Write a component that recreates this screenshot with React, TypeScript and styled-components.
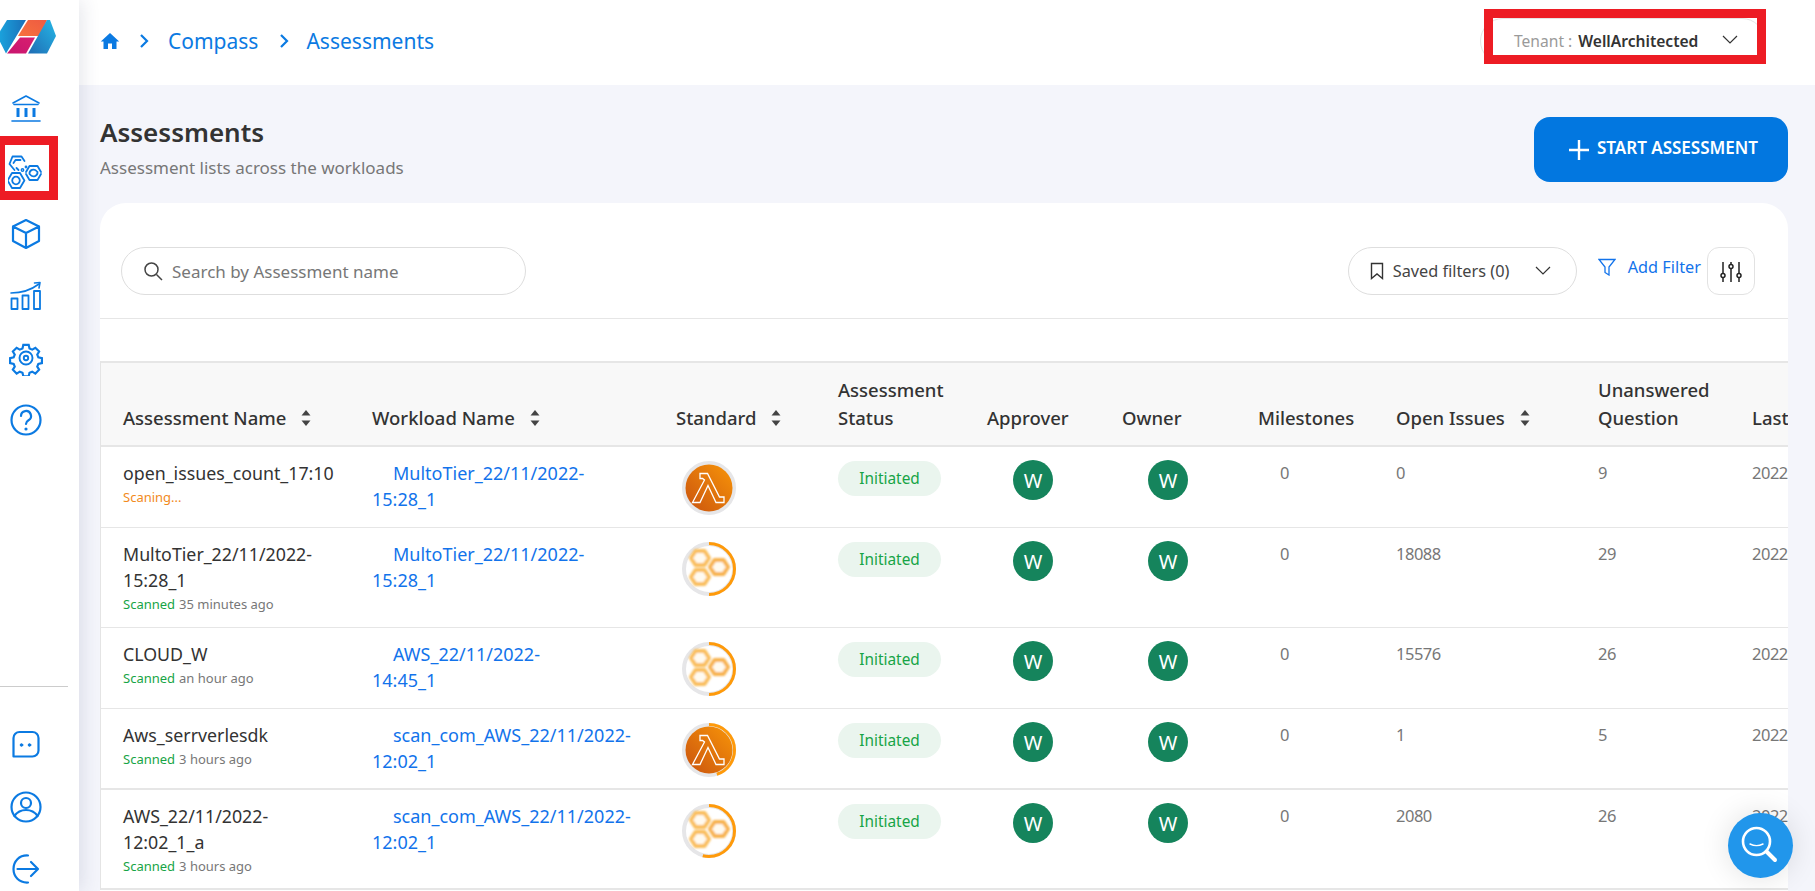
import React from "react";
import styled, { createGlobalStyle } from "styled-components";

const FONT = `"Noto Sans", "Open Sans", Arial, sans-serif`;
const BLUE = "#0b7ae2";
const LINK = "#1273eb";

const Global = createGlobalStyle`
  html, body { margin: 0; padding: 0; height: 891px; overflow: hidden; background: #f4f5fb; }
  body { font-family: ${FONT}; color: #333; }
  * { box-sizing: border-box; }
  #root { height: 891px; }
`;

const Shell = styled.div`
  display: flex;
  width: 1815px;
  height: 891px;
  overflow: hidden;
`;
const Sidebar = styled.aside`
  position: relative;
  z-index: 3;
  flex: 0 0 79px;
  display: flex;
  flex-direction: column;
  background: #fff;
  box-shadow: 3px 0 18px rgba(40, 50, 90, 0.12);
  overflow: hidden;
`;
const LogoWrap = styled.div`
  height: 79px;
  padding-top: 20px;
  svg { display: block; }
`;
const NavItem = styled.div`
  height: 62px;
  display: flex;
  align-items: center;
  padding-left: 8px;
  svg { display: block; }
`;
const NavBottom = styled.div`
  margin-top: auto;
  margin-bottom: -9px;
`;
const Rule = styled.div`
  width: 68px;
  height: 1px;
  background: #ccc;
  margin-bottom: 27px;
`;
const Mark = styled.div`
  position: absolute;
  left: -4px;
  top: 136px;
  width: 62px;
  height: 64px;
  border: 9px solid #ed1c24;
`;
const Main = styled.main`
  flex: 1;
  display: flex;
  flex-direction: column;
  min-width: 0;
`;
const Header = styled.header`
  position: relative;
  flex: 0 0 85px;
  background: #fff;
  display: flex;
  align-items: center;
  padding: 0 21px 4px;
`;
const Crumbs = styled.nav`
  display: flex;
  align-items: center;
  color: ${BLUE};
  font-size: 21px;
  svg { display: block; }
`;
const CrumbArrow = styled.svg<{ $left: number; $right: number }>`
  margin: 0 ${(p) => p.$right}px 0 ${(p) => p.$left}px;
`;
const Tenant = styled.div`
  position: absolute;
  left: 1401px;
  top: 18px;
  width: 285px;
  height: 46px;
  border: 1px solid #e4e4e4;
  border-radius: 23px;
  display: flex;
  align-items: center;
  padding-left: 33px;
  font-size: 15.6px;
  svg { margin-left: 24px; display: block; margin-top: -2px; }
`;
const TenantLabel = styled.span`
  color: #9a9a9a;
  margin-right: 6px;
`;
const TenantValue = styled.span`
  color: #333;
  font-weight: 600;
`;
const TenantMark = styled.div`
  position: absolute;
  left: 1405px;
  top: 9px;
  width: 282px;
  height: 55px;
  border: 9px solid #ed1c24;
`;
const Content = styled.div`
  flex: 1;
  padding: 32px 27px 0 21px;
  min-height: 0;
  display: flex;
  flex-direction: column;
`;
const TitleRow = styled.div`
  display: flex;
  justify-content: space-between;
  align-items: flex-start;
  height: 86px;
`;
const Title = styled.h1`
  margin: 0;
  font-size: 26px;
  line-height: 30px;
  font-weight: 600;
  color: #333;
`;
const Sub = styled.p`
  margin: 10px 0 0;
  font-size: 17px;
  line-height: 22px;
  color: #777;
`;
const StartButton = styled.button`
  width: 254px;
  height: 65px;
  border: 0;
  border-radius: 16px;
  background: #0277e0;
  color: #fff;
  font-family: ${FONT};
  font-size: 17px;
  font-weight: 600;
  display: flex;
  align-items: center;
  justify-content: flex-end;
  padding: 0 30px 4px 0;
  svg { margin-right: 8px; display: block; margin-top: 5px; }
`;
const Card = styled.section`
  flex: 1;
  background: #fff;
  border-radius: 26px 26px 0 0;
  overflow: hidden;
  display: flex;
  flex-direction: column;
`;
const Toolbar = styled.div`
  display: flex;
  align-items: flex-start;
  height: 116px;
  padding: 44px 33px 0 21px;
  border-bottom: 1px solid #e6e6e6;
  flex: none;
`;
const Search = styled.div`
  width: 405px;
  height: 48px;
  border: 1px solid #dedede;
  border-radius: 24px;
  display: flex;
  align-items: center;
  padding-left: 21px;
  font-size: 17px;
  color: #777;
  svg { margin-right: 9px; display: block; }
`;
const Saved = styled.div`
  margin-left: auto;
  width: 229px;
  height: 48px;
  border: 1px solid #dedede;
  border-radius: 24px;
  display: flex;
  align-items: center;
  padding-left: 21px;
  font-size: 16.3px;
  color: #444;
  svg { display: block; }
`;
const SavedText = styled.span`
  margin: 0 auto 0 9px;
`;
const Chevron = styled.svg`
  margin-right: 25px;
`;
const AddFilter = styled.div`
  display: flex;
  align-items: center;
  height: 40px;
  margin-left: 21px;
  margin-right: 6px;
  color: ${LINK};
  font-size: 16.3px;
  svg { margin-right: 12px; display: block; }
`;
const SliderButton = styled.div`
  width: 48px;
  height: 48px;
  border: 1px solid #e2e2e2;
  border-radius: 12px;
  display: flex;
  align-items: center;
  justify-content: center;
  svg { display: block; margin-top: 2px; }
`;
const Table = styled.div`
  margin-top: 42px;
  border-left: 1px solid #e4e4e4;
  width: 1900px;
  flex: none;
`;
const COLUMNS = "249px 304px 162px 149px 135px 136px 138px 202px 154px 200px";
const HeadRow = styled.div`
  display: grid;
  grid-template-columns: ${COLUMNS};
  height: 86px;
  background: #f8f8f8;
  border-top: 2px solid #e6e6e6;
  border-bottom: 2px solid #e6e6e6;
  align-items: end;
  padding: 0 0 13px 22px;
`;
const HeadCell = styled.div`
  font-size: 18.5px;
  line-height: 28px;
  font-weight: 500;
  color: #333;
  display: flex;
  align-items: center;
  white-space: pre-line;
  svg { margin-left: 15px; display: block; }
`;
const DataRow = styled.div<{ $thick?: boolean }>`
  display: grid;
  grid-template-columns: ${COLUMNS};
  padding: 14px 0 ${(p) => (p.$thick ? 11 : 12)}px 22px;
  border-bottom: ${(p) => (p.$thick ? 2 : 1)}px solid #e6e6e6;
  align-items: start;
`;
const NameCell = styled.div`
  margin-top: -1px;
`;
const Name = styled.div`
  font-size: 17.8px;
  line-height: 26px;
  color: #333;
  white-space: nowrap;
`;
const Status = styled.div`
  font-size: 13px;
  line-height: 22px;
  color: #777;
`;
const StatusTag = styled.span<{ $c: string }>`
  color: ${(p) => p.$c};
  margin-right: 4px;
`;
const WorkloadLink = styled.a`
  display: block;
  margin-top: -1px;
  font-size: 18px;
  line-height: 26px;
  color: ${LINK};
  white-space: nowrap;
`;
const WorkloadLine = styled.span`
  display: block;
  &:first-child { padding-left: 21px; }
`;
const Ring = styled.svg`
  display: block;
  margin: 0 0 0 6px;
`;
const Chip = styled.span`
  display: flex;
  align-items: center;
  justify-content: center;
  width: 103px;
  height: 35px;
  border-radius: 18px;
  background: #eaf5ee;
  color: #17a446;
  font-size: 15.4px;
`;
const Avatar = styled.div`
  width: 40px;
  height: 40px;
  margin: -1px 0 0 26px;
  border-radius: 50%;
  background: #15845c;
  color: #fff;
  font-size: 20px;
  font-weight: 400;
  display: flex;
  align-items: center;
  justify-content: center;
`;
const Value = styled.div<{ $indent?: number }>`
  font-size: 16.5px;
  letter-spacing: -0.5px;
  line-height: 26px;
  color: #777;
  margin-top: -1px;
  padding-left: ${(p) => p.$indent ?? 0}px;
`;
const Fab = styled.div`
  position: fixed;
  left: 1727.5px;
  top: 812.5px;
  width: 65px;
  height: 65px;
  border-radius: 50%;
  background: #2196eb;
  box-shadow: 0 0 30px rgba(0, 0, 0, 0.12);
  display: flex;
  align-items: center;
  justify-content: center;
  z-index: 5;
`;

const S = { fill: "none", stroke: BLUE, strokeWidth: 2, strokeLinecap: "round", strokeLinejoin: "round" } as const;
const Logo = () => (
  <svg width="58" height="36" viewBox="0 20 58 36">
    <defs>
      <linearGradient id="lb" x1="0" y1="0" x2="1" y2="0">
        <stop offset="0" stopColor="#1aa7e0" />
        <stop offset="1" stopColor="#1a6fb8" />
      </linearGradient>
      <linearGradient id="rb" x1="0" y1="1" x2="1" y2="0">
        <stop offset="0" stopColor="#1f6cb4" />
        <stop offset="1" stopColor="#25b7e6" />
      </linearGradient>
      <linearGradient id="or" x1="0" y1="1" x2="1" y2="0">
        <stop offset="0" stopColor="#f7713d" />
        <stop offset="1" stopColor="#ee5b42" />
      </linearGradient>
      <linearGradient id="mg" x1="0" y1="1" x2="1" y2="0">
        <stop offset="0" stopColor="#c8156f" />
        <stop offset="1" stopColor="#d81f6f" />
      </linearGradient>
    </defs>
    <polygon points="-3,36 7,20 26,20 6,53.5" fill="url(#lb)" />
    <polygon points="28,20 47,20 40,36 18,36" fill="url(#or)" />
    <polygon points="20,37.5 35,37.5 26,53.5 7,53.5" fill="url(#mg)" />
    <polygon points="47,20 50,20 56,36 47,53.5 28,53.5" fill="url(#rb)" />
  </svg>
);
const icon = (children: React.ReactNode) => (
  <svg width="36" height="36" viewBox="0 0 36 36" {...S}>
    {children}
  </svg>
);
const Bank = () =>
  icon(
    <>
      <path d="M5 11 18 4l13 7" strokeWidth="1.6" />
      <path d="M6 12.5h24" strokeWidth="1.6" />
      <path d="M10 16v9M18 16v9M26 16v9" strokeWidth="3" strokeLinecap="butt" />
      <path d="M4 29h28" strokeWidth="1.6" />
    </>
  );
const Cluster = () => (
  <svg width="36" height="36" viewBox="0 0 36 36" {...S} strokeWidth="1.800">
    <g transform="translate(9.500 9)">
      <path d="M-3 7-8 1-5-6.500H4L7-2" />
      <path d="M-4 0-2-3H3M-1 5 1 7" />
    </g>
    <g transform="translate(8 26.500)">
      <path d="M-4-7.500h8L8.400 0 4 7.500h-8L-8.400 0Z" />
      <circle r="3.800" />
    </g>
    <g transform="translate(25.500 19)">
      <path d="M-7.500-1-4-7h8L7.500-1M-7.500 1-4 7h8L7.500 1" />
      <path d="M-4 1a4 4 0 0 1 7-3M4-1a4 4 0 0 1-7 3" />
    </g>
    <circle cx="14.500" cy="16" r="1.200" strokeWidth="1.400" />
    <circle cx="18" cy="13" r=".8" strokeWidth="1.200" />
  </svg>
);
const Cube = () =>
  icon(
    <path d="M18 4 31 10.500V25L18 32 5 25V10.500ZM5 10.500 18 17 31 10.500M18 17V32" strokeWidth="2.200" />
  );
const Chart = () =>
  icon(
    <>
      <path d="M3 15C13 15 23 12 31 6" strokeWidth="1.600" />
      <path d="M26.500 5 32 4.500 31 10" strokeWidth="1.600" />
      <rect x="3.500" y="20.500" width="6" height="10.500" strokeWidth="1.800" />
      <rect x="14.500" y="17.500" width="6" height="13.500" strokeWidth="1.800" />
      <rect x="26" y="13" width="6" height="18" strokeWidth="1.800" />
    </>
  );
const Gear = () =>
  icon(
    <>
      <path d="M15 3.500h6l.9 3.900 3 1.300 3.500-2.100 4.200 4.200-2.100 3.500 1.200 3 4 .9v5.500l-4 .9-1.200 3 2.100 3.400-4.200 4.300-3.500-2.100-3 1.200-.9 3.900h-6l-.9-3.900-3-1.200-3.500 2.100-4.200-4.300 2.100-3.400-1.200-3-4-.9v-5.500l4-.9 1.200-3-2.100-3.500 4.200-4.200 3.500 2.100 3-1.300Z" transform="translate(1.800 1.800) scale(.9)" strokeWidth="2.400" strokeLinejoin="miter" />
      <circle cx="18" cy="18" r="6.500" strokeWidth="1.900" />
      <circle cx="18" cy="18" r="2.200" strokeWidth="1.900" />
    </>
  );
const Help = () =>
  icon(
    <>
      <circle cx="18" cy="18" r="14.500" strokeWidth="2.200" />
      <path d="M13 14a5 5 0 1 1 7.500 4.300c-1.700 1-2.500 1.800-2.500 3.700" strokeWidth="2.200" />
      <circle cx="18" cy="27" r=".8" strokeWidth="1.600" />
    </>
  );
const Chat = () =>
  icon(
    <>
      <path d="M5.500 29.500V11a6 6 0 0 1 6-6h13a6 6 0 0 1 6 6v12.500a6 6 0 0 1-6 6Z" strokeWidth="2.200" />
      <circle cx="13.500" cy="18" r="1.300" fill={BLUE} strokeWidth="1" />
      <circle cx="21.500" cy="18" r="1.300" fill={BLUE} strokeWidth="1" />
    </>
  );
const User = () =>
  icon(
    <>
      <circle cx="18" cy="18" r="14.500" strokeWidth="2.200" />
      <circle cx="18" cy="14" r="5" strokeWidth="2.200" />
      <path d="M6.500 27c3-4.500 7-6 11.500-6s8.500 1.500 11.500 6" strokeWidth="2.200" />
    </>
  );
const Logout = () =>
  icon(
    <>
      <path d="M20 4.500C11 4 5.500 10.500 5.500 18S11 32 20 31.500" strokeWidth="2.200" />
      <path d="M9.500 18h20M23 11l7 7-7 7" strokeWidth="2.200" />
    </>
  );

const HEX = "M-4.500-7h9L9 0 4.500 7h-9L-9 0Z";
const Honey = ({ id }: { id: string }) => (
  <g filter={`url(#${id})`} fill="#fffaf0" stroke="#f9bd5a" strokeWidth="4" strokeLinejoin="round">
    <path d={HEX} transform="translate(18 16)" />
    <path d={HEX} transform="translate(18 35)" />
    <path d={HEX} transform="translate(37 25)" stroke="#f7b14c" />
  </g>
);
const Standard = ({ kind, idx, progress }: { kind: "lambda" | "honey"; idx: number; progress: number }) => (
  <Ring width="54" height="54" viewBox="0 0 54 54">
    <defs>
      <linearGradient id={`lam${idx}`} x1="0" y1="1" x2="1" y2="0">
        <stop offset="0" stopColor="#c9530f" />
        <stop offset="1" stopColor="#f89508" />
      </linearGradient>
      <filter id={`bl${idx}`} x="-10%" y="-10%" width="120%" height="120%">
        <feGaussianBlur stdDeviation="0.900" />
      </filter>
    </defs>
    <circle cx="27" cy="27" r="25" fill="#fff" stroke="#e6e6e8" strokeWidth="4" />
    {kind === "lambda" ? (
      <>
        <circle cx="27" cy="27" r="23.500" fill={`url(#lam${idx})`} />
        <path
          d="M18 12.500h7.500L37.500 36H42v5.500h-8L26 24.500 18 41.500h-7.500L22.500 19 20.500 17.500H18Z"
          fill="none"
          stroke="#fff"
          strokeWidth="1.300"
        />
      </>
    ) : (
      <Honey id={`bl${idx}`} />
    )}
    {progress > 0 && (
      <circle
        cx="27"
        cy="27"
        r="25.500"
        fill="none"
        stroke="#ff9a0a"
        strokeWidth="3"
        pathLength={100}
        strokeDasharray={`${progress} 100`}
        transform="rotate(-90 27 27)"
      />
    )}
  </Ring>
);

const SortIcon = () => (
  <svg width="10" height="16" viewBox="0 0 10 16" fill="#444">
    <path d="M5 0 9.500 5.500h-9Z" />
    <path d="M5 16 .5 10.500h9Z" />
  </svg>
);

type Row = {
  name: string[];
  status: [string, string, string];
  workload: string[];
  kind: "lambda" | "honey";
  progress: number;
  issues: string;
  unanswered: string;
  thick?: boolean;
};
const rows: Row[] = [
  { name: ["open_issues_count_17:10"], status: ["Scaning...", "#f28a1c", ""], workload: ["MultoTier_22/11/2022-", "15:28_1"], kind: "lambda", progress: 0, issues: "0", unanswered: "9" },
  { name: ["MultoTier_22/11/2022-", "15:28_1"], status: ["Scanned", "#17a446", "35 minutes ago"], workload: ["MultoTier_22/11/2022-", "15:28_1"], kind: "honey", progress: 50, issues: "18088", unanswered: "29" },
  { name: ["CLOUD_W"], status: ["Scanned", "#17a446", "an hour ago"], workload: ["AWS_22/11/2022-", "14:45_1"], kind: "honey", progress: 50, issues: "15576", unanswered: "26" },
  { name: ["Aws_serrverlesdk"], status: ["Scanned", "#17a446", "3 hours ago"], workload: ["scan_com_AWS_22/11/2022-", "12:02_1"], kind: "lambda", progress: 45, issues: "1", unanswered: "5", thick: true },
  { name: ["AWS_22/11/2022-", "12:02_1_a"], status: ["Scanned", "#17a446", "3 hours ago"], workload: ["scan_com_AWS_22/11/2022-", "12:02_1"], kind: "honey", progress: 54, issues: "2080", unanswered: "26", thick: true },
];

const ArrowPath = () => <path d="M3 2l6 6-6 6" />;

export default function App() {
  return (
    <Shell>
      <Global />
      <Sidebar>
        <LogoWrap>
          <Logo />
        </LogoWrap>
        <NavItem><Bank /></NavItem>
        <NavItem><Cluster /></NavItem>
        <NavItem><Cube /></NavItem>
        <NavItem><Chart /></NavItem>
        <NavItem><Gear /></NavItem>
        <NavItem><Help /></NavItem>
        <NavBottom>
          <Rule />
          <NavItem><Chat /></NavItem>
          <NavItem><User /></NavItem>
          <NavItem><Logout /></NavItem>
        </NavBottom>
        <Mark />
      </Sidebar>
      <Main>
        <Header>
          <Crumbs>
            <svg width="20" height="20" viewBox="0 0 20 20" fill={BLUE}>
              <path d="M10 2 .8 10.500H3.500V18H8v-5.500h4V18h4.500v-7.500h2.700Z" />
            </svg>
            <CrumbArrow $left={18} $right={18} width="12" height="16" viewBox="0 0 12 16" fill="none" stroke={BLUE} strokeWidth="2.200">
              <ArrowPath />
            </CrumbArrow>
            <span>Compass</span>
            <CrumbArrow $left={20} $right={16} width="12" height="16" viewBox="0 0 12 16" fill="none" stroke={BLUE} strokeWidth="2.200">
              <ArrowPath />
            </CrumbArrow>
            <span>Assessments</span>
          </Crumbs>
          <Tenant>
            <TenantLabel>Tenant :</TenantLabel>
            <TenantValue>WellArchitected</TenantValue>
            <svg width="16" height="10" viewBox="0 0 16 10" fill="none" stroke="#333" strokeWidth="1.200">
              <path d="M1 1l7 7 7-7" />
            </svg>
          </Tenant>
          <TenantMark />
        </Header>
        <Content>
          <TitleRow>
            <div>
              <Title>Assessments</Title>
              <Sub>Assessment lists across the workloads</Sub>
            </div>
            <StartButton>
              <svg width="20" height="20" viewBox="0 0 20 20" stroke="#fff" strokeWidth="2.400">
                <path d="M10 0v20M0 10h20" />
              </svg>
              START ASSESSMENT
            </StartButton>
          </TitleRow>
          <Card>
            <Toolbar>
              <Search>
                <svg width="20" height="20" viewBox="0 0 20 20" fill="none" stroke="#444" strokeWidth="1.500">
                  <circle cx="8.500" cy="8.500" r="6.500" />
                  <path d="M13.500 13.500 19 19" />
                </svg>
                Search by Assessment name
              </Search>
              <Saved>
                <svg width="14" height="18" viewBox="0 0 14 18" fill="none" stroke="#333" strokeWidth="1.400">
                  <path d="M1.500 1.500h11v15L7 12l-5.500 4.500Z" />
                </svg>
                <SavedText>Saved filters (0)</SavedText>
                <Chevron width="16" height="10" viewBox="0 0 16 10" fill="none" stroke="#333" strokeWidth="1.200">
                  <path d="M1 1l7 7 7-7" />
                </Chevron>
              </Saved>
              <AddFilter>
                <svg width="18" height="18" viewBox="0 0 18 18" fill="none" stroke={LINK} strokeWidth="1.300">
                  <path d="M1 1.500h16L11 9v8l-4-2.500V9Z" />
                </svg>
                Add Filter
              </AddFilter>
              <SliderButton>
                <svg width="22" height="22" viewBox="0 0 22 22" fill="none" stroke="#222" strokeWidth="1.500">
                  <path d="M3 1v11M3 17v4M11 1v2M11 8v13M19 1v11M19 17v4" />
                  <circle cx="3" cy="14.500" r="2" />
                  <circle cx="11" cy="5.500" r="2" />
                  <circle cx="19" cy="14.500" r="2" />
                </svg>
              </SliderButton>
            </Toolbar>
            <Table>
              <HeadRow>
                <HeadCell>Assessment Name<SortIcon /></HeadCell>
                <HeadCell>Workload Name<SortIcon /></HeadCell>
                <HeadCell>Standard<SortIcon /></HeadCell>
                <HeadCell>{"Assessment\nStatus"}</HeadCell>
                <HeadCell>Approver</HeadCell>
                <HeadCell>Owner</HeadCell>
                <HeadCell>Milestones</HeadCell>
                <HeadCell>Open Issues<SortIcon /></HeadCell>
                <HeadCell>{"Unanswered\nQuestion"}</HeadCell>
                <HeadCell>Last Updated</HeadCell>
              </HeadRow>
              {rows.map((r, i) => (
                <DataRow key={i} $thick={r.thick}>
                  <NameCell>
                    {r.name.map((n) => (
                      <Name key={n}>{n}</Name>
                    ))}
                    <Status>
                      <StatusTag $c={r.status[1]}>{r.status[0]}</StatusTag>
                      {r.status[2]}
                    </Status>
                  </NameCell>
                  <WorkloadLink>
                    {r.workload.map((w) => (
                      <WorkloadLine key={w}>{w}</WorkloadLine>
                    ))}
                  </WorkloadLink>
                  <Standard kind={r.kind} idx={i} progress={r.progress} />
                  <div><Chip>Initiated</Chip></div>
                  <Avatar>W</Avatar>
                  <Avatar>W</Avatar>
                  <Value $indent={22}>0</Value>
                  <Value>{r.issues}</Value>
                  <Value>{r.unanswered}</Value>
                  <Value>2022-11-22</Value>
                </DataRow>
              ))}
            </Table>
          </Card>
        </Content>
      </Main>
      <Fab>
        <svg width="38" height="38" viewBox="0 0 38 38" fill="none" stroke="#fff" strokeLinecap="round">
          <circle cx="15.500" cy="15.500" r="13.500" strokeWidth="2.600" />
          <path d="M9 18c4 2 9 2 13 0" strokeWidth="1.400" />
          <path d="M25.500 25.500 34 34" strokeWidth="4" />
        </svg>
      </Fab>
    </Shell>
  );
}
